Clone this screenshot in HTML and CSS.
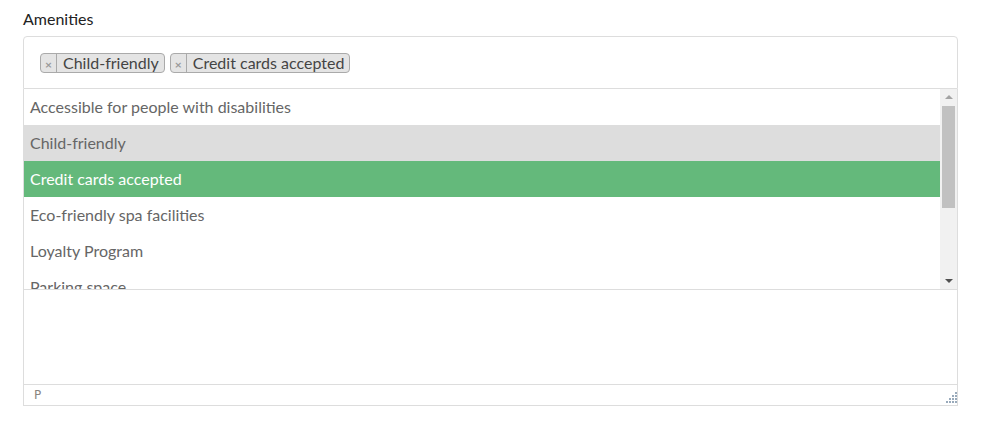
FILE: index.html
```html
<!DOCTYPE html>
<html>
<head>
<meta charset="utf-8">
<link rel="stylesheet" href="styles.css">
</head>
<body>
<div class="page">
  <label class="label">Amenities</label>
  <div class="field">
    <div class="selection">
      <span class="tag"><span class="tag-x">×</span><span class="tag-text">Child-friendly</span></span>
      <span class="tag"><span class="tag-x">×</span><span class="tag-text">Credit cards accepted</span></span>
    </div>
    <div class="dropdown">
      <ul class="options">
        <li class="option">Accessible for people with disabilities</li>
        <li class="option selected">Child-friendly</li>
        <li class="option highlighted">Credit cards accepted</li>
        <li class="option">Eco-friendly spa facilities</li>
        <li class="option">Loyalty Program</li>
        <li class="option">Parking space</li>
      </ul>
      <div class="scrollbar">
        <span class="arrow-up"></span>
        <span class="thumb"></span>
        <span class="arrow-down"></span>
      </div>
    </div>
    <div class="editor"></div>
    <div class="statusbar">
      <span class="path">P</span>
      <svg class="resize" width="12" height="12" viewBox="0 0 12 12">
        <g fill="#9ab">
          <rect x="10" y="0" width="2" height="2"/>
          <rect x="7" y="3" width="2" height="2"/><rect x="10" y="3" width="2" height="2"/>
          <rect x="4" y="6" width="2" height="2"/><rect x="7" y="6" width="2" height="2"/><rect x="10" y="6" width="2" height="2"/>
          <rect x="1" y="9" width="2" height="2"/><rect x="4" y="9" width="2" height="2"/><rect x="7" y="9" width="2" height="2"/><rect x="10" y="9" width="2" height="2"/>
        </g>
      </svg>
    </div>
  </div>
</div>
</body>
</html>
```

FILE: styles.css
```css
* { box-sizing: border-box; }
html, body { margin: 0; padding: 0; background: #fff; }
body { font-family: Lato, "Open Sans", sans-serif; }
.page { padding: 9px 0 0 23px; }
.label {
  display: block;
  font-size: 16px;
  line-height: 20px;
  color: #222;
  margin-bottom: 7px;
}
.field { width: 935px; }
.selection {
  height: 53px;
  border: 1px solid #ddd;
  border-radius: 4px 4px 0 0;
  padding: 16px 0 0 16px;
  display: flex;
  gap: 5px;
  align-items: flex-start;
}
.tag {
  display: flex;
  align-items: stretch;
  height: 20px;
  background: #e4e4e4;
  border: 1px solid #aaa;
  border-radius: 4px;
  color: #444;
  font-size: 16px;
  line-height: 18px;
}
.tag-x {
  width: 16px;
  border-right: 1px solid #aaa;
  color: #999;
  font-size: 12px;
  font-weight: bold;
  text-align: center;
  line-height: 21px;
}
.tag-text { padding: 0 5px 0 6px; }
.dropdown {
  display: flex;
  height: 201px;
  border: 1px solid #ddd;
  border-top: none;
}
.options {
  flex: 1;
  margin: 0;
  padding: 0;
  list-style: none;
  overflow: hidden;
}
.option {
  height: 36px;
  line-height: 36px;
  padding-left: 6px;
  font-size: 16px;
  color: #666;
}
.option.selected { background: #ddd; }
.option.highlighted { background: #64b97b; color: #fff; }
.scrollbar {
  width: 17px;
  background: #f1f1f1;
  display: flex;
  flex-direction: column;
  align-items: center;
}
.arrow-up {
  margin-top: 6px;
  width: 0; height: 0;
  border-left: 4px solid transparent;
  border-right: 4px solid transparent;
  border-bottom: 4px solid #a3a3a3;
}
.thumb {
  margin-top: 7px;
  width: 13px;
  height: 102px;
  background: #c1c1c1;
}
.arrow-down {
  margin-top: auto;
  margin-bottom: 6px;
  width: 0; height: 0;
  border-left: 4px solid transparent;
  border-right: 4px solid transparent;
  border-top: 4px solid #505050;
}
.editor {
  height: 94px;
  border-left: 1px solid #ddd;
  border-right: 1px solid #ddd;
}
.statusbar {
  height: 22px;
  border: 1px solid #ddd;
  display: flex;
  align-items: center;
  justify-content: space-between;
  padding: 0 0 0 10px;
}
.path {
  font-family: "DejaVu Sans", sans-serif;
  font-size: 12px;
  color: #8a8580;
}
.resize { align-self: flex-end; margin-bottom: 1px; }
```
